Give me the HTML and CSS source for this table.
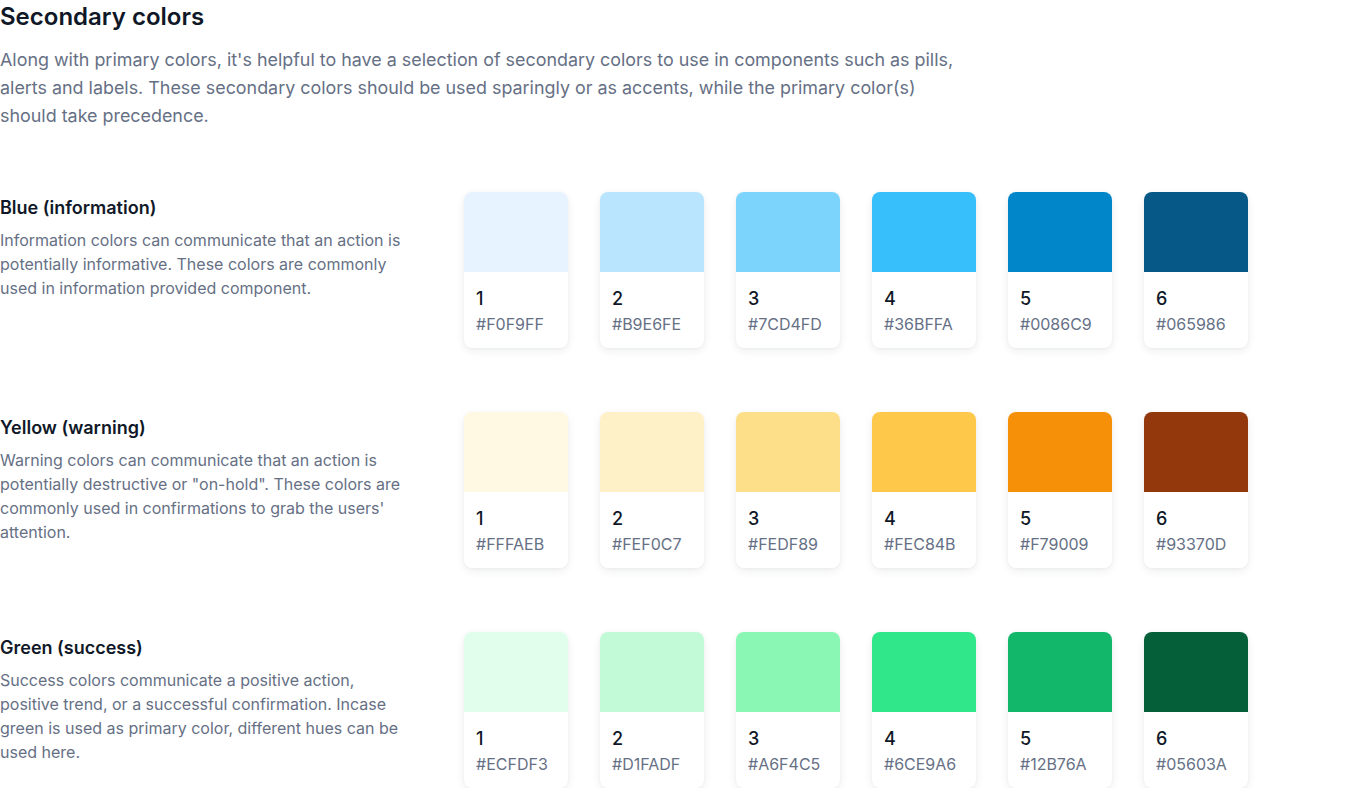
FILE: index.html
```html
<!DOCTYPE html>
<html lang="en">
<head>
<meta charset="utf-8">
<title>Secondary colors</title>
<link rel="stylesheet" href="styles.css">
</head>
<body>
<main class="page">
  <header class="intro">
    <h1 class="title">Secondary colors</h1>
    <p class="lead">Along with primary colors, it's helpful to have a selection of secondary colors to use in components such as pills, alerts and labels. These secondary colors should be used sparingly or as accents, while the primary color(s) should take precedence.</p>
  </header>

  <div class="groups">
  <section class="group">
    <div class="info">
      <h2 class="group-title">Blue (information)</h2>
      <p class="group-desc">Information colors can communicate that an action is potentially informative. These colors are commonly used in information provided component.</p>
    </div>
    <div class="swatches">
      <div class="card"><div class="chip c-b1"></div><div class="meta"><span class="num">1</span><span class="hex">#F0F9FF</span></div></div>
      <div class="card"><div class="chip c-b2"></div><div class="meta"><span class="num">2</span><span class="hex">#B9E6FE</span></div></div>
      <div class="card"><div class="chip c-b3"></div><div class="meta"><span class="num">3</span><span class="hex">#7CD4FD</span></div></div>
      <div class="card"><div class="chip c-b4"></div><div class="meta"><span class="num">4</span><span class="hex">#36BFFA</span></div></div>
      <div class="card"><div class="chip c-b5"></div><div class="meta"><span class="num">5</span><span class="hex">#0086C9</span></div></div>
      <div class="card"><div class="chip c-b6"></div><div class="meta"><span class="num">6</span><span class="hex">#065986</span></div></div>
    </div>
  </section>

  <section class="group">
    <div class="info">
      <h2 class="group-title">Yellow (warning)</h2>
      <p class="group-desc">Warning colors can communicate that an action is potentially destructive or "on-hold". These colors are commonly used in confirmations to grab the users' attention.</p>
    </div>
    <div class="swatches">
      <div class="card"><div class="chip c-y1"></div><div class="meta"><span class="num">1</span><span class="hex">#FFFAEB</span></div></div>
      <div class="card"><div class="chip c-y2"></div><div class="meta"><span class="num">2</span><span class="hex">#FEF0C7</span></div></div>
      <div class="card"><div class="chip c-y3"></div><div class="meta"><span class="num">3</span><span class="hex">#FEDF89</span></div></div>
      <div class="card"><div class="chip c-y4"></div><div class="meta"><span class="num">4</span><span class="hex">#FEC84B</span></div></div>
      <div class="card"><div class="chip c-y5"></div><div class="meta"><span class="num">5</span><span class="hex">#F79009</span></div></div>
      <div class="card"><div class="chip c-y6"></div><div class="meta"><span class="num">6</span><span class="hex">#93370D</span></div></div>
    </div>
  </section>

  <section class="group">
    <div class="info">
      <h2 class="group-title">Green (success)</h2>
      <p class="group-desc">Success colors communicate a positive action, positive trend, or a successful confirmation. Incase green is used as primary color, different hues can be used here.</p>
    </div>
    <div class="swatches">
      <div class="card"><div class="chip c-g1"></div><div class="meta"><span class="num">1</span><span class="hex">#ECFDF3</span></div></div>
      <div class="card"><div class="chip c-g2"></div><div class="meta"><span class="num">2</span><span class="hex">#D1FADF</span></div></div>
      <div class="card"><div class="chip c-g3"></div><div class="meta"><span class="num">3</span><span class="hex">#A6F4C5</span></div></div>
      <div class="card"><div class="chip c-g4"></div><div class="meta"><span class="num">4</span><span class="hex">#6CE9A6</span></div></div>
      <div class="card"><div class="chip c-g5"></div><div class="meta"><span class="num">5</span><span class="hex">#12B76A</span></div></div>
      <div class="card"><div class="chip c-g6"></div><div class="meta"><span class="num">6</span><span class="hex">#05603A</span></div></div>
    </div>
  </section>
  </div>
</main>
</body>
</html>
```

FILE: styles.css
```css
* { box-sizing: border-box; }
html, body { margin: 0; padding: 0; background: #ffffff; }
body {
  font-family: Inter, "Noto Sans", "Liberation Sans", sans-serif;
  color: #101828;
}
.page {
  display: flex;
  flex-direction: column;
  gap: 62px;
  padding: 2px 0 0 0;
}
.intro { display: flex; flex-direction: column; gap: 14px; }
.title {
  margin: 0;
  font-size: 24px;
  line-height: 30px;
  font-weight: 600;
  color: #101828;
}
.lead {
  margin: 0;
  max-width: 965px;
  font-size: 17.9px;
  line-height: 28px;
  color: #667085;
}
.groups { display: flex; flex-direction: column; gap: 64px; }
.group {
  display: grid;
  grid-template-columns: 408px auto;
  column-gap: 56px;
  align-items: start;
}
.info { padding-top: 4px; display: flex; flex-direction: column; gap: 8px; }
.group-title {
  margin: 0;
  font-size: 18px;
  line-height: 24px;
  font-weight: 600;
  color: #101828;
}
.group-desc {
  margin: 0;
  font-size: 16px;
  line-height: 24px;
  color: #667085;
}
.swatches { display: flex; gap: 32px; }
.card {
  width: 104px;
  height: 156px;
  border-radius: 8px;
  overflow: hidden;
  background: #ffffff;
  box-shadow: 0 3px 10px rgba(16, 24, 40, 0.07), 0 1px 3px rgba(16, 24, 40, 0.04);
  display: flex;
  flex-direction: column;
}
.chip { height: 80px; }
.meta {
  display: flex;
  flex-direction: column;
  gap: 1px;
  padding: 15px 12px 0;
}
.num { font-size: 18px; line-height: 24px; font-weight: 500; color: #101828; }
.hex { font-size: 16px; line-height: 24px; color: #667085; }

.c-b1 { background: #E7F4FF; }
.c-b2 { background: #B9E6FE; }
.c-b3 { background: #7CD4FD; }
.c-b4 { background: #36BFFA; }
.c-b5 { background: #0086C9; }
.c-b6 { background: #065986; }
.c-y1 { background: #FFF8E3; }
.c-y2 { background: #FEF0C7; }
.c-y3 { background: #FEDF89; }
.c-y4 { background: #FEC84B; }
.c-y5 { background: #F79009; }
.c-y6 { background: #93370D; }
.c-g1 { background: #E1FDEB; }
.c-g2 { background: #C2FAD7; }
.c-g3 { background: #8AF7B4; }
.c-g4 { background: #30E889; }
.c-g5 { background: #12B76A; }
.c-g6 { background: #05603A; }
```
